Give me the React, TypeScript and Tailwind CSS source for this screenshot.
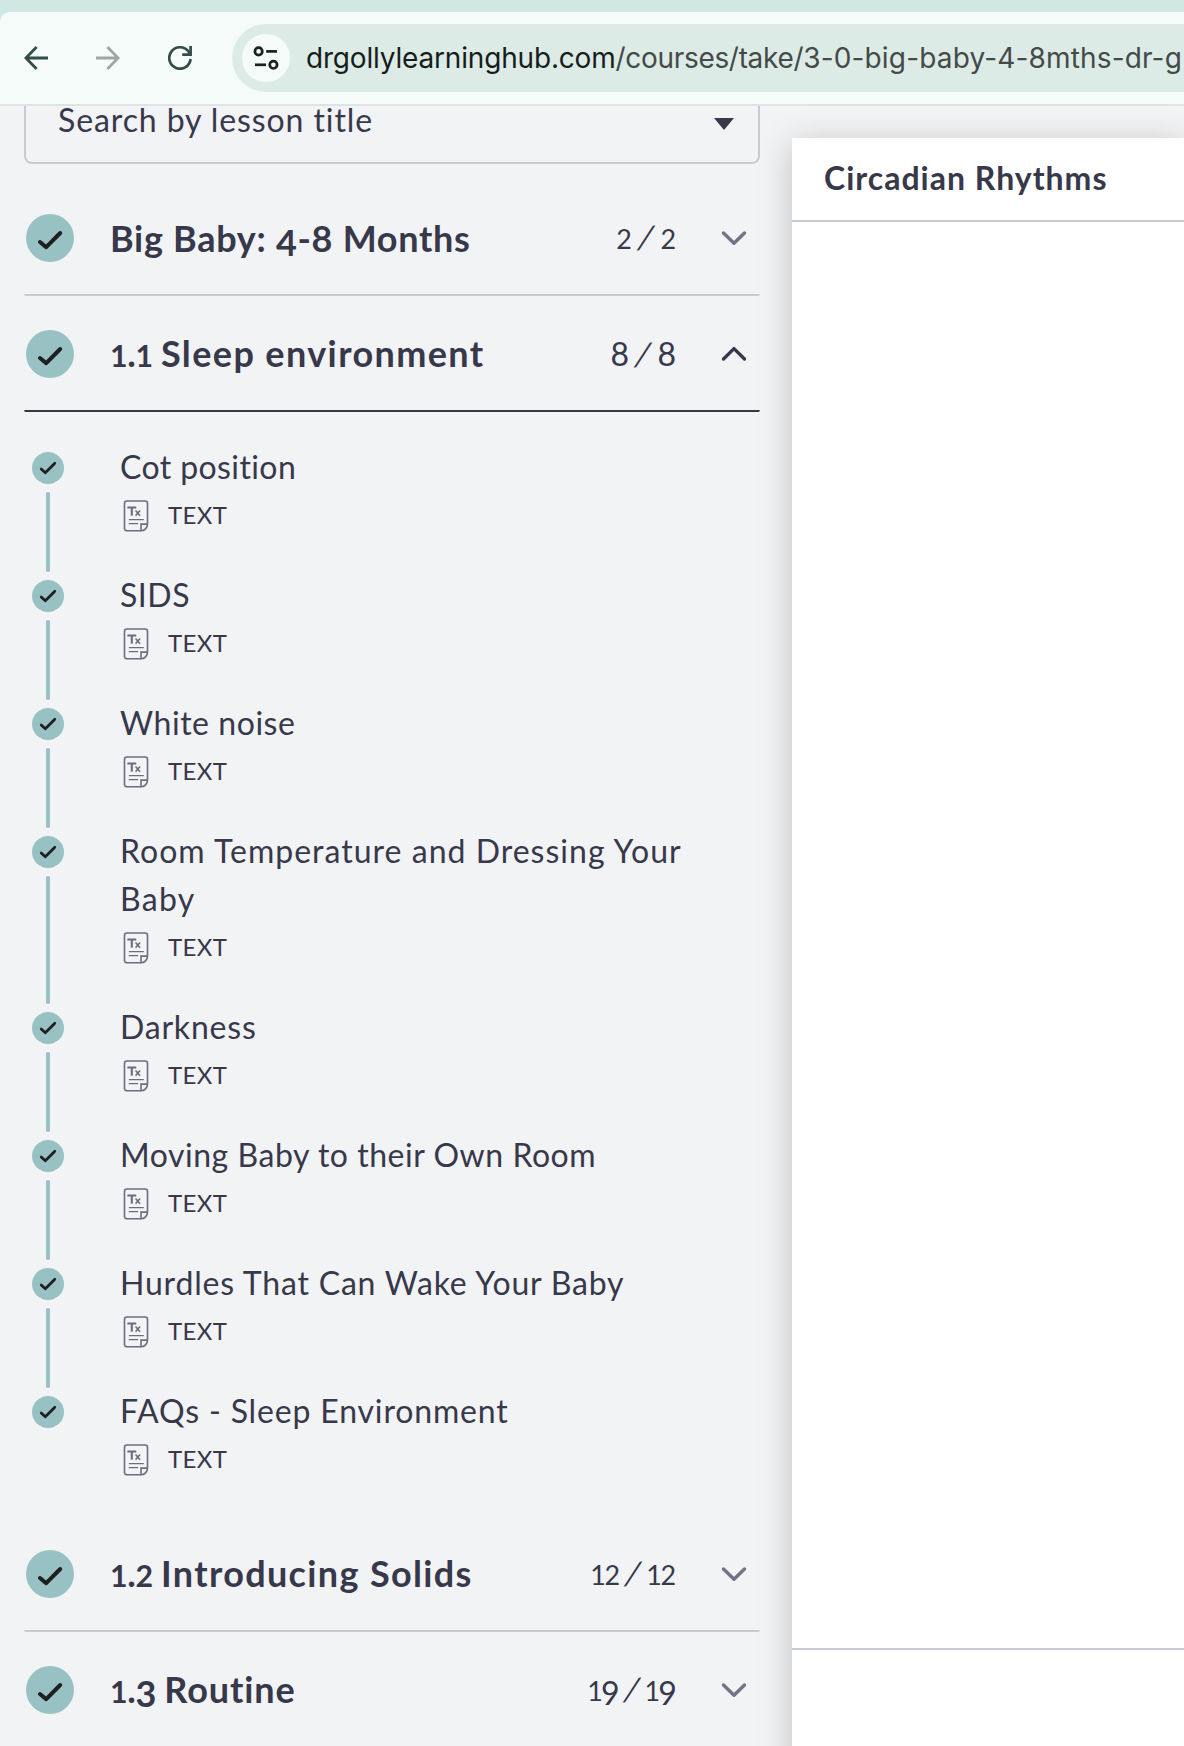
type Lesson = { lines: string[]; track: string[] };

const lessons: Lesson[] = [
  { lines: ['Cot position'], track: ['tracking-[0.4px]'] },
  { lines: ['SIDS'], track: ['tracking-[0.5px]'] },
  { lines: ['White noise'], track: ['tracking-[0.55px]'] },
  { lines: ['Room Temperature and Dressing Your', 'Baby'], track: ['tracking-[1.02px]', 'tracking-[1.3px]'] },
  { lines: ['Darkness'], track: ['tracking-[0.8px]'] },
  { lines: ['Moving Baby to their Own Room'], track: ['tracking-[0.53px]'] },
  { lines: ['Hurdles That Can Wake Your Baby'], track: ['tracking-[0.8px]'] },
  { lines: ['FAQs - Sleep Environment'], track: ['tracking-[0.84px]'] },
];

/* Old-style figures: 0-2 sit at x-height, 3/4/5/7/9 hang below the baseline. */
function Figures({ children }: { children: string }) {
  return (
    <>
      {(children.match(/[012]|[34579]|[^01234579]+/g) ?? []).map((c, i) => {
        if (/^[012]$/.test(c)) return <span key={i} className="text-[0.84em]">{c}</span>;
        if (/^[34579]$/.test(c)) return <span key={i} className="relative top-[0.13em]">{c}</span>;
        return c;
      })}
    </>
  );
}

function Check({ className }: { className: string }) {
  return (
    <svg viewBox="0 0 48 48" className={className}>
      <circle cx="24" cy="24" r="24" fill="#98c1c3" />
      <path d="M14 28l6.2 5.2L34.2 19" fill="none" stroke="#1f1f1f" strokeWidth="4" strokeLinecap="round" strokeLinejoin="round" />
    </svg>
  );
}

function SmallCheck() {
  return (
    <svg viewBox="0 0 32 32" className="size-8 shrink-0">
      <circle cx="16" cy="16" r="16" fill="#98c1c3" />
      <path d="M9.2 17l4.1 3.8L22.8 11.3" fill="none" stroke="#1f1f1f" strokeWidth="2.7" strokeLinecap="round" strokeLinejoin="round" />
    </svg>
  );
}

function TextIcon() {
  return (
    <svg viewBox="0 0 32 32" className="size-8 shrink-0" fill="none" stroke="#6d6d80" strokeWidth="1.6">
      <path d="M6.8 1h18.4a2.3 2.3 0 0 1 2.3 2.3V24.2a6.6 6.6 0 0 1-6.6 6.6H6.8a2.3 2.3 0 0 1-2.3-2.3V3.3A2.3 2.3 0 0 1 6.8 1z" />
      <path d="M21 30.5v-6.4h6.4" />
      <path d="M8.8 19.7h15M8.8 23.6h9.4" strokeWidth="1.3" />
      <path d="M7.4 7.5h8.8M11.8 7.5v8.3" strokeWidth="2.1" />
      <path d="M15.6 10.4l4.4 5.4M20 10.4l-4.4 5.4" strokeWidth="1.6" />
    </svg>
  );
}

function Section({
  number,
  title,
  track,
  count,
  countTrack,
  open,
  last,
}: {
  number?: string;
  title: string;
  track: string;
  count: [string, string];
  countTrack: string;
  open?: boolean;
  last?: boolean;
}) {
  return (
    <div
      className={`flex h-[116px] shrink-0 items-center rounded-[2px] border-b-2 pt-0.5 pr-[14px] pl-0.5 ${
        last ? 'border-transparent' : open ? 'border-[#38384b]' : 'border-[#c9cbd4]'
      }`}
    >
      <Check className="size-12 shrink-0" />
      <h2 className={`ml-9 flex-1 pb-px text-[36px] leading-[46px] font-bold whitespace-nowrap ${track}`}>
        {number && (
          <span className="tracking-[-0.35px]">
            <Figures>{number}</Figures>{' '}
          </span>
        )}
        <Figures>{title}</Figures>
      </h2>
      <span className={`mr-[46px] text-[32px] leading-[48px] whitespace-nowrap ${countTrack}`}>
        <Figures>{count[0]}</Figures>
        <span className="mx-[7px] inline-block -skew-x-[14deg]">/</span>
        <Figures>{count[1]}</Figures>
      </span>
      <svg viewBox="0 0 24 14" className="h-[14px] w-6 shrink-0 overflow-visible" fill="none" strokeWidth="3.4" strokeLinecap="round" strokeLinejoin="round">
        {open ? <path d="M1.5 12L12 1.6 22.5 12" stroke="#38384b" /> : <path d="M1.5 2L12 12.3 22.5 2" stroke="#737386" />}
      </svg>
    </div>
  );
}

function Toolbar() {
  return (
    <div className="h-[106px] shrink-0 bg-[#d1e7e3] pt-3">
      <div className="flex h-[94px] items-center rounded-tl-[10px] border-b-2 border-[#dde5e2] bg-[#f5fbf9]">
        <svg viewBox="0 0 24 24" className="ml-6 size-6" fill="none" stroke="#354c48" strokeWidth="2.8">
          <path d="M12.6 1L1.9 12l10.7 11M1.9 12H24" />
        </svg>
        <svg viewBox="0 0 24 24" className="ml-12 size-6" fill="none" stroke="#9da7a4" strokeWidth="2.8">
          <path d="M11.4 1l10.7 11-10.7 11M22.1 12H0" />
        </svg>
        <svg viewBox="0 0 24 24" className="ml-12 size-6" fill="none" stroke="#354c48" strokeWidth="2.7">
          <path d="M22.6 13A10.7 10.7 0 1 1 20.4 5.4L22.6 8.6" />
          <path d="M22.6 0v8.6H14.2" />
        </svg>
        <div className="ml-10 flex h-[68px] flex-1 items-center rounded-l-full bg-[#ddebe7] pl-[10px]">
          <div className="flex size-12 shrink-0 items-center justify-center rounded-full bg-[#f5fbf9]">
            <svg viewBox="0 0 24 24" className="size-6 overflow-visible" fill="none" stroke="#1b211f" strokeWidth="2.7">
              <circle cx="4.6" cy="5.4" r="3.7" />
              <path d="M12.2 5.4H23" />
              <circle cx="19.4" cy="18.8" r="3.7" />
              <path d="M1 18.8h11" />
            </svg>
          </div>
          <div className="ml-4 font-[Inter,sans-serif] text-[28px] leading-10 whitespace-nowrap text-[#444a48]">
            <span className="tracking-[-0.18px] text-[#171d1b]">drgollylearninghub.com</span>
            <span className="tracking-[-0.32px]">/courses/take/</span>
            <span className="tracking-[0.16px]">3-0-big-baby-4-8mths-dr-g</span>
          </div>
        </div>
      </div>
    </div>
  );
}

export default function App() {
  return (
    <div className="flex h-[1746px] w-[1184px] flex-col overflow-hidden bg-[#f1f3f5] font-[Lato,sans-serif] text-[#38384b]">
      <Toolbar />
      <div className="flex min-h-0 flex-1 overflow-hidden">
        <aside className="ml-6 flex w-[736px] shrink-0 flex-col">
          <div className="mb-4 flex h-[58px] shrink-0 items-start justify-between rounded-b-lg border-2 border-t-0 border-[#c9cbd4] pr-6 pl-8">
            <span className="text-[32px] leading-[28px] tracking-[0.9px]">Search by lesson title</span>
            <svg viewBox="0 0 20 12" className="mt-3 h-3 w-5">
              <path d="M0 0h20L10 12z" fill="#38384b" />
            </svg>
          </div>
          <Section title="Big Baby: 4-8 Months" track="tracking-[0.7px]" count={['2', '2']} countTrack="tracking-[0px]" />
          <Section number="1.1" title="Sleep environment" track="tracking-[1.38px]" count={['8', '8']} countTrack="tracking-[0px]" open />
          <ul className="flex shrink-0 flex-col pt-8">
            {lessons.map((l, i) => (
              <li key={l.lines[0]} className="flex">
                <div className="ml-2 flex w-8 flex-col items-center pt-2">
                  <SmallCheck />
                  {i < lessons.length - 1 && <div className="mt-2 w-1 flex-1 rounded-full bg-[#98c1c3]" />}
                </div>
                <div className="ml-14 pb-8">
                  {l.lines.map((t, k) => (
                    <div key={t} className={`h-12 text-[32px] leading-[46px] whitespace-nowrap ${l.track[k]}`}>
                      {t}
                    </div>
                  ))}
                  <div className="flex h-12 items-center">
                    <TextIcon />
                    <span className="ml-4 pb-0.5 text-[24px] leading-[46px] tracking-[0.4px]">TEXT</span>
                  </div>
                </div>
              </li>
            ))}
          </ul>
          <Section number="1.2" title="Introducing Solids" track="tracking-[1.35px]" count={['12', '12']} countTrack="tracking-[-1.2px] pr-px" />
          <Section number="1.3" title="Routine" track="tracking-[0.9px]" count={['19', '19']} countTrack="tracking-[-1.8px] pr-px" last />
        </aside>
        <main className="mt-8 ml-8 flex h-[1800px] flex-1 flex-col bg-white shadow-[0_6px_32px_rgba(0,0,0,0.21)]">
          <header className="flex h-[84px] shrink-0 items-center border-b-2 border-[#c9cbd4] px-8 pb-0.5 text-[32px] leading-[48px] font-bold tracking-[1px] whitespace-nowrap">
            Circadian Rhythms
          </header>
          <div className="h-[1426px] shrink-0" />
          <footer className="flex-1 border-t-2 border-[#c9cbd4]" />
        </main>
      </div>
    </div>
  );
}
